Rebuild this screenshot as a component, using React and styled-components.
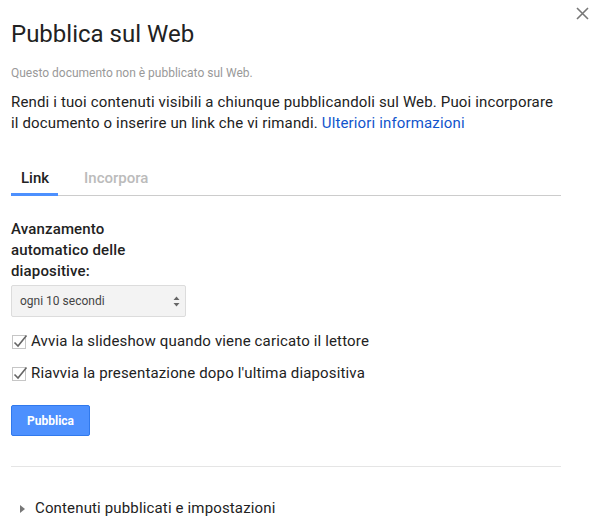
import React from "react";
import styled, { createGlobalStyle } from "styled-components";

const Global = createGlobalStyle`
  html, body { margin: 0; padding: 0; background: #fff; }
  body { font-family: Roboto, "Liberation Sans", Arial, sans-serif; color: #222; }
  * { box-sizing: border-box; }
`;

const Dialog = styled.div`
  position: relative;
  width: 598px;
  min-height: 528px;
  padding: 18px 37px 0 11px;
`;

const Close = styled.button`
  position: absolute;
  top: 7px;
  right: 9px;
  width: 13px;
  height: 13px;
  padding: 0;
  border: 0;
  background: none;
  display: flex;
  cursor: pointer;
`;

const Title = styled.h1`
  margin: 0;
  font-size: 24px;
  line-height: 32px;
  font-weight: 400;
  color: #222;
`;

const Status = styled.div`
  margin-top: 15px;
  font-size: 12px;
  line-height: 16px;
  color: #999;
`;

const Para = styled.p`
  margin: 11px 0 0;
  width: 550px;
  font-size: 15px;
  line-height: 21px;
  letter-spacing: 0.15px;
  color: #222;
`;

const A = styled.a`
  color: #15c;
  text-decoration: none;
`;

const TabBar = styled.div`
  margin-top: 34px;
  display: flex;
  gap: 16px;
  border-bottom: 1px solid #ccc;
`;

const Tab = styled.div`
  padding: 0 9px 4px 10px;
  margin-bottom: -1px;
  font-size: 15px;
  line-height: 21px;
  font-weight: 500;
  color: ${(p) => (p.$active ? "#222" : "#bbb")};
  border-bottom: 3px solid ${(p) => (p.$active ? "#4d90fe" : "transparent")};
`;

const Label = styled.div`
  margin-top: 23px;
  width: 132px;
  font-size: 15px;
  line-height: 21px;
  letter-spacing: 0.15px;
  font-weight: 500;
  color: #222;
`;

const Select = styled.div`
  margin-top: 3px;
  width: 175px;
  height: 32px;
  display: flex;
  align-items: center;
  justify-content: space-between;
  padding: 0 5px 0 8px;
  background: #f3f3f3;
  border: 1px solid #dcdcdc;
  border-radius: 2px;
  font-size: 12px;
  color: #444;
`;

const Checks = styled.div`
  margin-top: 14px;
  display: flex;
  flex-direction: column;
  gap: 11px;
`;

const CheckRow = styled.label`
  display: flex;
  align-items: center;
  gap: 5px;
  padding-left: 1px;
  font-size: 15px;
  line-height: 21px;
  letter-spacing: 0.15px;
  color: #222;
`;

const Button = styled.button`
  margin-top: 21px;
  width: 79px;
  height: 31px;
  padding: 0;
  background: #4d90fe;
  border: 1px solid #3079ed;
  border-radius: 2px;
  color: #fff;
  font-family: Roboto, "Liberation Sans", Arial, sans-serif;
  font-size: 12px;
  font-weight: 700;
  display: block;
`;

const Rule = styled.hr`
  margin: 30px 0 0;
  border: 0;
  border-top: 1px solid #e5e5e5;
  width: 550px;
`;

const Disclosure = styled.div`
  margin-top: 31px;
  display: flex;
  align-items: center;
  gap: 10px;
  padding-left: 9px;
  font-size: 15px;
  line-height: 21px;
  letter-spacing: 0.15px;
  color: #222;
`;

function Checkbox() {
  return (
    <svg width="14" height="14" viewBox="0 0 14 14" style={{ overflow: "visible", flex: "none" }}>
      <rect x="0.5" y="0.5" width="13" height="13" fill="#fff" stroke="#c6c6c6" />
      <path d="M2.5 7.5 L6 11 L14.5 0.5" fill="none" stroke="#666" strokeWidth="1.6" />
    </svg>
  );
}

export default function App() {
  return (
    <>
      <Global />
      <Dialog>
        <Close aria-label="Chiudi">
          <svg width="13" height="13" viewBox="0 0 13 13">
            <path d="M1 1 L12 12 M12 1 L1 12" stroke="#777" strokeWidth="1.6" />
          </svg>
        </Close>
        <Title>Pubblica sul Web</Title>
        <Status>Questo documento non è pubblicato sul Web.</Status>
        <Para>
          Rendi i tuoi contenuti visibili a chiunque pubblicandoli sul Web. Puoi incorporare il
          documento o inserire un link che vi rimandi. <A href="#">Ulteriori informazioni</A>
        </Para>
        <TabBar>
          <Tab $active>Link</Tab>
          <Tab>Incorpora</Tab>
        </TabBar>
        <Label>Avanzamento automatico delle diapositive:</Label>
        <Select>
          <span>ogni 10 secondi</span>
          <svg width="7" height="11" viewBox="0 0 7 11">
            <path d="M0.5 4 L3.5 0.5 L6.5 4 Z M0.5 7 L3.5 10.5 L6.5 7 Z" fill="#666" />
          </svg>
        </Select>
        <Checks>
          <CheckRow>
            <Checkbox />
            Avvia la slideshow quando viene caricato il lettore
          </CheckRow>
          <CheckRow>
            <Checkbox />
            Riavvia la presentazione dopo l'ultima diapositiva
          </CheckRow>
        </Checks>
        <Button>Pubblica</Button>
        <Rule />
        <Disclosure>
          <svg width="5" height="8" viewBox="0 0 5 8">
            <path d="M0 0 L5 4 L0 8 Z" fill="#777" />
          </svg>
          Contenuti pubblicati e impostazioni
        </Disclosure>
      </Dialog>
    </>
  );
}
